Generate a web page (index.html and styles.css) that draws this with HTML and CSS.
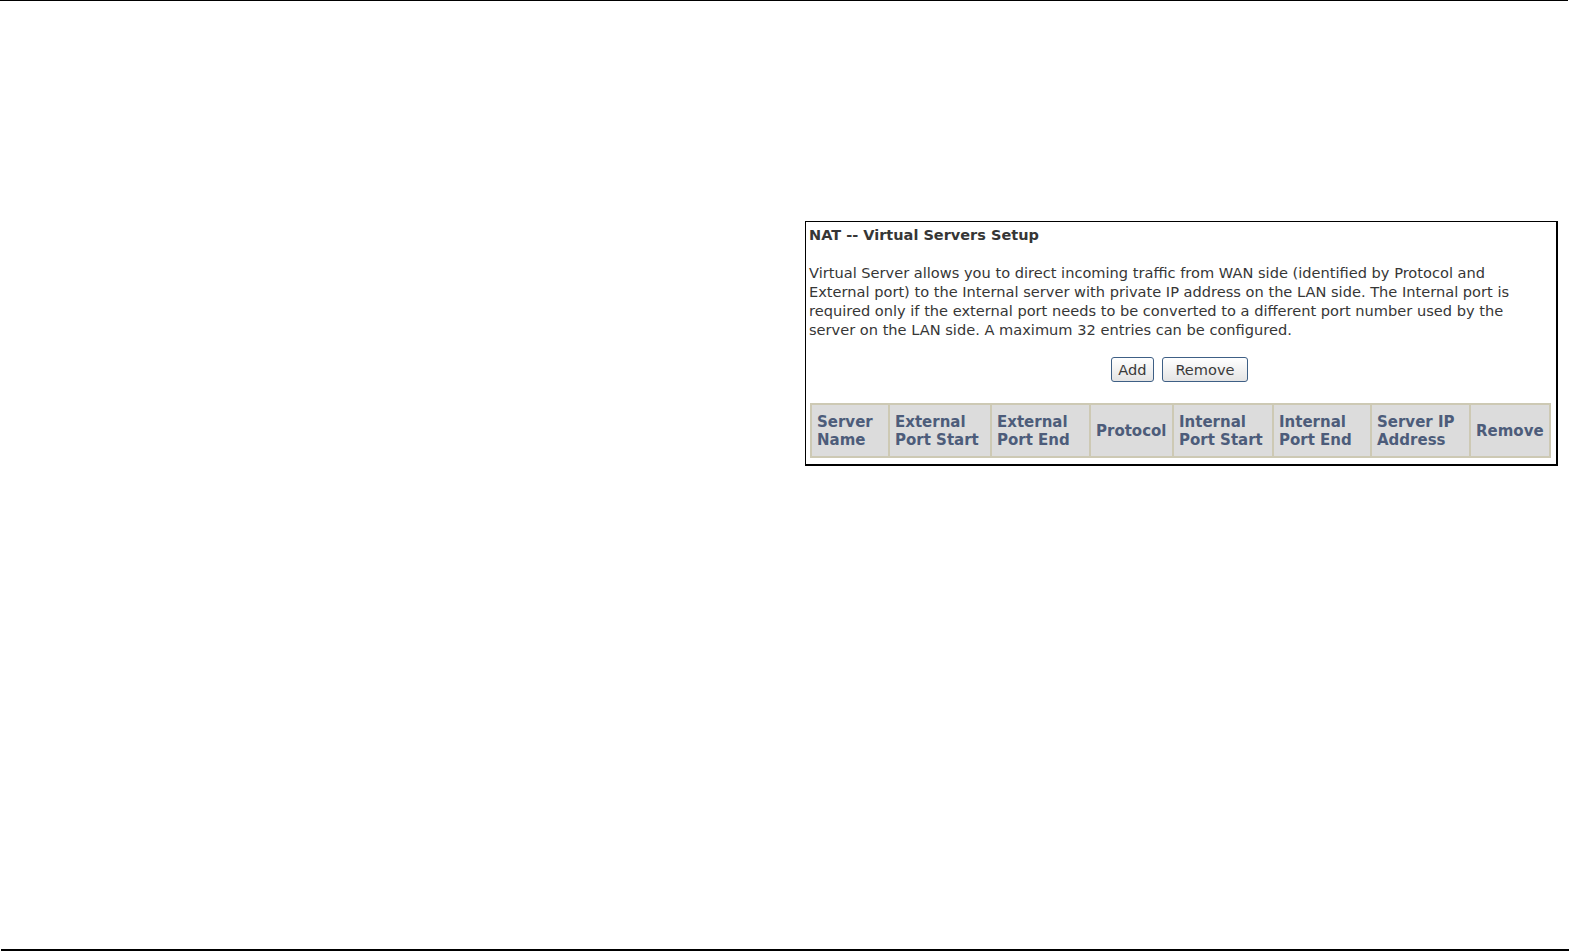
FILE: index.html
```html
<!DOCTYPE html>
<html>
<head>
<meta charset="utf-8">
<link rel="stylesheet" href="styles.css">
</head>
<body>
<div class="page">
  <div class="rule-top"></div>
  <div class="content">
    <div class="shot">
      <div class="title">NAT -- Virtual Servers Setup</div>
      <p class="desc">Virtual Server allows you to direct incoming traffic from WAN side (identified by Protocol and<br>External port) to the Internal server with private IP address on the LAN side. The Internal port is<br>required only if the external port needs to be converted to a different port number used by the<br>server on the LAN side. A maximum 32 entries can be configured.</p>
      <div class="buttons">
        <button class="btn btn-add">Add</button>
        <button class="btn btn-remove">Remove</button>
      </div>
      <table class="grid">
        <tr>
          <th class="c1">Server<br>Name</th>
          <th class="c2">External<br>Port Start</th>
          <th class="c3">External<br>Port End</th>
          <th class="c4">Protocol</th>
          <th class="c5">Internal<br>Port Start</th>
          <th class="c6">Internal<br>Port End</th>
          <th class="c7">Server IP<br>Address</th>
          <th class="c8">Remove</th>
        </tr>
      </table>
    </div>
  </div>
  <div class="rule-bottom"></div>
</div>
</body>
</html>
```
FILE: styles.css
```css
html, body {
  margin: 0;
  padding: 0;
  background: #ffffff;
}
.page {
  width: 1569px;
  height: 952px;
  display: flex;
  flex-direction: column;
}
.rule-top {
  height: 1px;
  background: #000;
  width: 1568px;
}
.content {
  flex: 1;
  padding: 220px 0 0 805px;
}
.rule-bottom {
  height: 2px;
  background: #000;
  margin: 0 0 1px 1px;
  width: 1568px;
}
.shot {
  width: 750px;
  height: 242px;
  border-left: 1px solid #000;
  border-top: 1px solid #000;
  border-right: 2px solid #000;
  border-bottom: 2px solid #000;
  box-sizing: content-box;
  font-family: "DejaVu Sans", Verdana, sans-serif;
  color: #363636;
}
.title {
  font-size: 14.5px;
  font-weight: bold;
  line-height: 17px;
  padding: 5px 0 0 3px;
}
.desc {
  margin: 19px 0 0 3px;
  font-size: 14.6px;
  line-height: 19px;
}
.buttons {
  display: flex;
  justify-content: center;
  gap: 8px;
  margin-top: 18px;
  padding-right: 3px;
}
.btn {
  font-family: "DejaVu Sans", Verdana, sans-serif;
  font-size: 14.6px;
  color: #3a3a3a;
  height: 25px;
  padding: 0;
  border: 1px solid #3e5f85;
  border-radius: 3px;
  background: linear-gradient(#ffffff, #e4e4e4);
}
.btn-add { width: 43px; }
.btn-remove { width: 86px; }
.grid {
  margin: 21px 0 0 4px;
  border-collapse: collapse;
  border: 2px solid #d6d3c2;
}
.grid th {
  background: #dcdcdc;
  border: 2px solid #cdc9b4;
  color: #4d5c7a;
  font-size: 15px;
  line-height: 18px;
  text-align: left;
  font-weight: bold;
  padding: 0 0 0 5px;
  height: 53px;
  box-sizing: border-box;
}
.c1 { width: 78px; }
.c2 { width: 102px; }
.c3 { width: 99px; }
.c4 { width: 83px; }
.c5 { width: 100px; }
.c6 { width: 98px; }
.c7 { width: 99px; }
.c8 { width: 80px; }
```
